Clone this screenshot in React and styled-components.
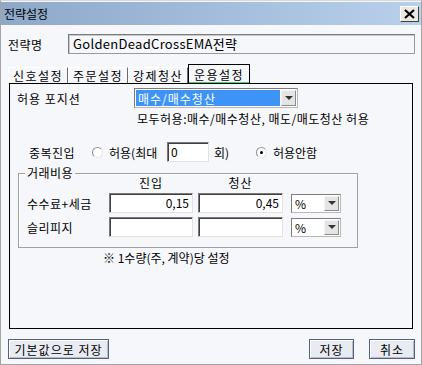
import React from 'react'
import styled, { createGlobalStyle } from 'styled-components'

const GlobalStyle = createGlobalStyle`
  body {
    margin: 0;
    font-family: "Noto Sans CJK KR", "Noto Sans", sans-serif;
    font-size: 12px;
    color: #000;
  }
`

const Window = styled.div`
  width: 422px;
  height: 365px;
  box-sizing: border-box;
  border: 1px solid #a4a4a4;
  border-top-color: #d8d8d8;
  background: #f5f7fb;
  display: flex;
  flex-direction: column;
`

const TitleBar = styled.div`
  height: 23px;
  margin-top: 1px;
  background: linear-gradient(to right, #8ea8c9, #b8d0ea);
  display: flex;
  align-items: center;
  justify-content: space-between;
  padding: 0 2px 0 3px;
  line-height: 14px;
`

const CloseButton = styled.div`
  width: 19px;
  height: 16px;
  box-sizing: border-box;
  border: 1px solid;
  border-color: #ffffff #404040 #404040 #ffffff;
  background: #ece9e3;
  display: flex;
  align-items: center;
  justify-content: center;
`

const Content = styled.div`
  flex: 1;
  display: flex;
  flex-direction: column;
  padding: 0 6px 0 7px;
`

const NameRow = styled.div`
  display: flex;
  align-items: center;
  margin-top: 9px;
  height: 20px;
`

const NameLabel = styled.div`
  width: 60px;
  letter-spacing: 0.5px;
`

const NameBox = styled.div`
  flex: 1;
  height: 20px;
  box-sizing: border-box;
  border: 1px solid #7c7c7c;
  border-right-color: #9a9a9a;
  border-bottom-color: #9a9a9a;
  box-shadow: inset 1px 1px 0 #c8c8c8;
  padding-left: 4px;
  line-height: 18px;
  font-size: 13px;
  letter-spacing: 0.3px;
`

const TabStrip = styled.div`
  display: flex;
  align-items: flex-end;
  margin-top: 10px;
  height: 19px;
`

const Tab = styled.div`
  height: ${p => (p.active ? 19 : 16)}px;
  width: ${p => (p.active ? 62 : 60)}px;
  box-sizing: border-box;
  display: flex;
  align-items: center;
  justify-content: center;
  border: 1px solid;
  border-bottom: none;
  border-color: ${p => (p.active ? '#000' : '#ffffff #6a6a6a #6a6a6a #ffffff')};
  box-shadow: ${p => (p.active ? 'inset 0 -1px 0 #3fd27a' : 'none')};
  background: #f5f7fb;
  letter-spacing: 1.5px;
  padding-top: ${p => (p.active ? 1 : 0)}px;
`

const Panel = styled.div`
  height: 246px;
  box-sizing: border-box;
  margin: 0 2px 0 1px;
  border: 1px solid #000;
  display: flex;
  flex-direction: column;
  padding-top: 4px;
`

const Row = styled.div`
  display: flex;
  align-items: center;
  height: 20px;
  padding-left: ${p => p.indent}px;
  margin-top: ${p => p.top || 0}px;
`

const Label = styled.div`
  width: ${p => p.w}px;
  letter-spacing: ${p => p.spacing || 0}px;
  padding-left: ${p => p.pad || 0}px;
  flex-shrink: 0;
`

const Combo = styled.div`
  width: ${p => p.w}px;
  height: ${p => p.h || 20}px;
  box-sizing: border-box;
  border: 1px solid #7c7c7c;
  border-right-color: #b8b8b8;
  border-bottom-color: #b8b8b8;
  background: #fff;
  display: flex;
  align-items: stretch;
  padding: 1px;
`

const ComboText = styled.div`
  flex: 1;
  display: flex;
  align-items: center;
  padding-left: 2px;
  background: ${p => (p.selected ? '#3d94f6' : '#fff')};
  color: ${p => (p.selected ? '#fff' : '#000')};
  letter-spacing: ${p => (p.selected ? 1 : 0)}px;
  margin-right: 1px;
`

const DropButton = styled.div`
  width: 15px;
  box-sizing: border-box;
  border: 1px solid;
  border-color: #f4f4f4 #8a8a8a #8a8a8a #f4f4f4;
  background: #e4e4e4;
  display: flex;
  align-items: center;
  justify-content: center;
`

const Arrow = styled.div`
  width: 0;
  height: 0;
  border-left: 4px solid transparent;
  border-right: 4px solid transparent;
  border-top: 4px solid #333;
`

const Hint = styled.div`
  margin-top: 4px;
  height: 14px;
  line-height: 14px;
  padding-left: 127px;
  letter-spacing: 0.5px;
`

const Radio = styled.span`
  width: 11px;
  height: 11px;
  box-sizing: border-box;
  border-radius: 50%;
  border: 1px solid;
  border-color: #909090 #e8e8e8 #e8e8e8 #909090;
  background: #fff;
  display: inline-flex;
  align-items: center;
  justify-content: center;
  margin-right: 6px;
  flex-shrink: 0;
  &::after {
    content: '';
    width: 3px;
    height: 3px;
    border-radius: 50%;
    background: ${p => (p.checked ? '#000' : 'transparent')};
  }
`

const TextBox = styled.div`
  width: ${p => p.w}px;
  height: 20px;
  box-sizing: border-box;
  border: 1px solid;
  border-color: #7a7a7a #e2e2e2 #e2e2e2 #7a7a7a;
  box-shadow: inset 1px 1px 0 #404040;
  background: #fff;
  text-align: ${p => p.align || 'left'};
  padding: 0 3px;
  line-height: 18px;
  flex-shrink: 0;
`

const GroupBox = styled.div`
  position: relative;
  margin: 11px 0 0 8px;
  width: 340px;
  height: 75px;
  box-sizing: border-box;
  border: 1px solid #a0a0a0;
  box-shadow: inset 1px 1px 0 #ffffff;
  padding: 1px 0 0 8px;
`

const Legend = styled.div`
  position: absolute;
  top: -8px;
  left: 6px;
  padding: 0 2px;
  line-height: 14px;
  letter-spacing: 0.5px;
  background: #f5f7fb;
`

const CostGrid = styled.div`
  display: grid;
  grid-template-columns: 77px 84px 85px 50px;
  column-gap: 5px;
  row-gap: 4px;
  align-items: center;
  & > :nth-child(4n) {
    margin-left: 3px;
  }
`

const ColHead = styled.div`
  height: 15px;
  line-height: 15px;
  text-align: center;
  letter-spacing: 1px;
  margin-bottom: -1px;
`

const RowLabel = styled.span`
  letter-spacing: 0.5px;
`

const Note = styled.div`
  margin-top: 3px;
  padding-left: 93px;
  height: 14px;
  line-height: 14px;
`

const ButtonRow = styled.div`
  display: flex;
  align-items: center;
  margin-top: 10px;
  gap: 15px;
`

const Button = styled.div`
  width: ${p => p.w}px;
  height: 20px;
  box-sizing: border-box;
  border: 1px solid #53617c;
  box-shadow: inset 1px 1px 0 #ffffff, inset -1px -1px 0 #b6bccb;
  background: #e8ebf1;
  display: flex;
  align-items: center;
  justify-content: center;
  letter-spacing: 1px;
  margin-left: ${p => (p.push ? 'auto' : '0')};
`

function CloseIcon() {
  return (
    <svg width="11" height="10" viewBox="0 0 11 10">
      <path d="M1 1 L10 9 M10 1 L1 9" stroke="#000" strokeWidth="2.2" />
    </svg>
  )
}

function ComboBox({ w, h, text, selected }) {
  return (
    <Combo w={w} h={h}>
      <ComboText selected={selected}>{text}</ComboText>
      <DropButton>
        <Arrow />
      </DropButton>
    </Combo>
  )
}

export default function App() {
  return (
    <>
      <GlobalStyle />
      <Window>
        <TitleBar>
          <span>전략설정</span>
          <CloseButton>
            <CloseIcon />
          </CloseButton>
        </TitleBar>
        <Content>
          <NameRow>
            <NameLabel>전략명</NameLabel>
            <NameBox>GoldenDeadCrossEMA전략</NameBox>
          </NameRow>

          <TabStrip>
            <Tab>신호설정</Tab>
            <Tab>주문설정</Tab>
            <Tab>강제청산</Tab>
            <Tab active>운용설정</Tab>
          </TabStrip>

          <Panel>
            <Row indent={7}>
              <Label w={117} spacing={1}>허용 포지션</Label>
              <ComboBox w={164} text="매수/매수청산" selected />
            </Row>
            <Hint>모두허용:매수/매수청산, 매도/매도청산 허용</Hint>

            <Row indent={19} top={16}>
              <Label w={63} spacing={0.5}>중복진입</Label>
              <Radio />
              <Label w={58}>허용(최대</Label>
              <TextBox w={42}>0</TextBox>
              <Label w={42} pad={5}>회)</Label>
              <Radio checked />
              <span>허용안함</span>
            </Row>

            <GroupBox>
              <Legend>거래비용</Legend>
              <CostGrid>
                <span />
                <ColHead>진입</ColHead>
                <ColHead>청산</ColHead>
                <span />

                <RowLabel>수수료+세금</RowLabel>
                <TextBox w={84} align="right">0,15</TextBox>
                <TextBox w={85} align="right">0,45</TextBox>
                <ComboBox w={50} h={19} text="%" />

                <RowLabel>슬리피지</RowLabel>
                <TextBox w={84} />
                <TextBox w={85} />
                <ComboBox w={50} h={19} text="%" />
              </CostGrid>
            </GroupBox>

            <Note>※ 1수량(주, 계약)당 설정</Note>
          </Panel>

          <ButtonRow>
            <Button w={101}>기본값으로 저장</Button>
            <Button w={45} push>저장</Button>
            <Button w={46}>취소</Button>
          </ButtonRow>
        </Content>
      </Window>
    </>
  )
}
